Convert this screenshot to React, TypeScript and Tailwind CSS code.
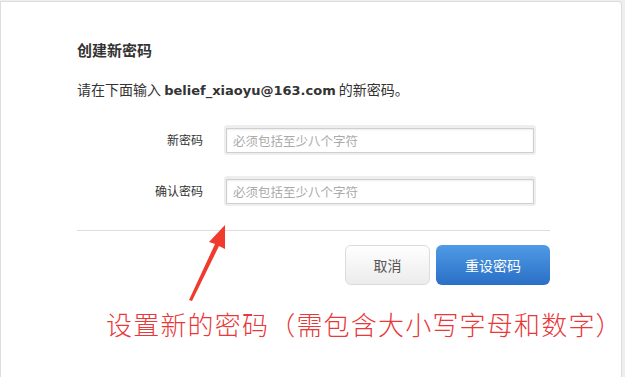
import React from "react";

const font = { fontFamily: '"Noto Sans CJK SC", "Liberation Sans", sans-serif' };

function Field({ label }: { label: string }) {
  return (
    <div className="flex items-center">
      <label className="w-[147px] pr-[21px] text-right text-[12px] text-[#333]">{label}</label>
      <div className="rounded-[3px] bg-[#eeeeee] p-[2px]">
        <input
          className="h-[25px] w-[308px] border border-[#cfcfcf] bg-white px-[6px] text-[12.5px] text-[#333] placeholder-[#aaaaaa] shadow-[inset_0_1px_2px_rgba(0,0,0,0.08)] outline-none"
          placeholder="必须包括至少八个字符"
        />
      </div>
    </div>
  );
}

export default function App() {
  return (
    <div className="h-[377px] w-[625px] overflow-hidden bg-[#eeeeee] pt-[1px]" style={font}>
      <div className="relative h-[380px] w-[622px] rounded-tr-[4px] border-l border-t border-r border-[#dddddd] bg-white pl-[76px] pt-[37px]">
        <h1 className="text-[15px] font-bold text-[#333]">创建新密码</h1>
        <p className="mt-[17px] whitespace-nowrap text-[14px] text-[#333]">
          请在下面输入{" "}
          <span className="text-[13px] font-bold" style={{ fontFamily: '"DejaVu Sans", "Liberation Sans", sans-serif' }}>
            belief_xiaoyu@163.com
          </span>{" "}
          的新密码。
        </p>
        <div className="mt-[25px] flex flex-col gap-[21px]">
          <Field label="新密码" />
          <Field label="确认密码" />
        </div>
        <div className="mt-[24px] w-[473px] border-t border-[#dddddd]" />
        <div className="mt-[14px] flex w-[473px] justify-end gap-[6px]">
          <button className="h-[40px] w-[85px] rounded-[6px] border border-[#dcdcdc] bg-gradient-to-b from-white to-[#ececec] text-[14px] text-[#555]">
            取消
          </button>
          <button className="h-[40px] w-[114px] rounded-[6px] bg-gradient-to-b from-[#4f9be6] to-[#2a6fc6] text-[14px] text-white">
            重设密码
          </button>
        </div>
        <p className="ml-[29px] mt-[19px] whitespace-nowrap text-[26px] font-light tracking-[1.2px] text-[#e8383a]">
          设置新的密码（需包含大小写字母和数字）
        </p>
        <svg className="absolute left-[185px] top-[218px]" width="50" height="84" viewBox="0 0 50 84">
          <path d="M3 80 L29 24 L23 22 L39 5 L39 29 L33 26 L6 81 Z" fill="#f03a2e" />
        </svg>
      </div>
    </div>
  );
}
